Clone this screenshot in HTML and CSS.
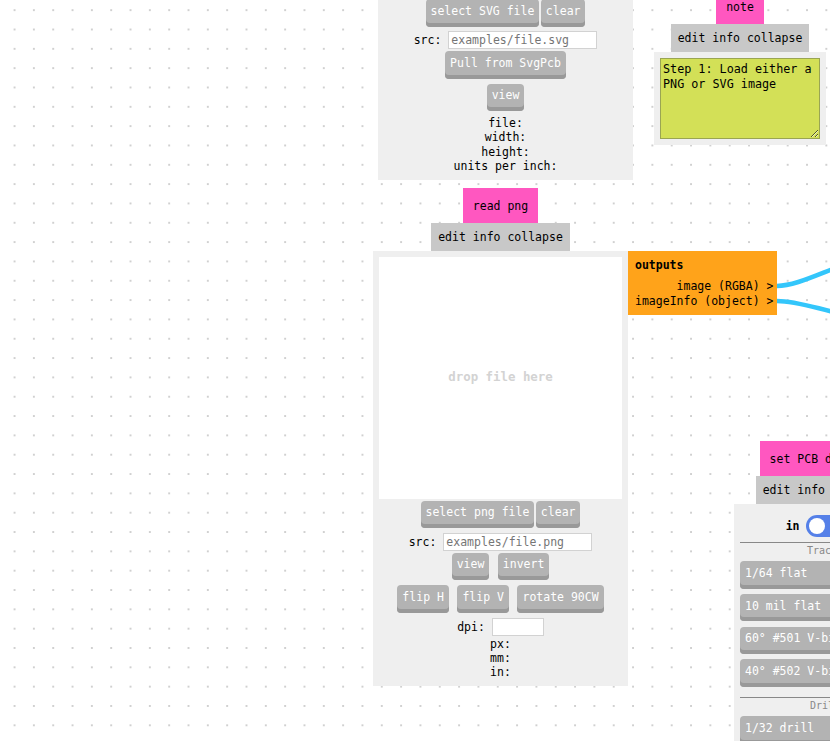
FILE: index.html
```html
<!DOCTYPE html>
<html lang="en">
<head>
  <meta charset="UTF-8">
  <meta name="viewport" content="width=device-width, initial-scale=1.0">
  <title>mods</title>
  <link rel="stylesheet" href="styles.css">
</head>
<body>
  <!-- Links between modules -->
  <svg class="links" width="830" height="741">
    <path d="M777 286 C 793 286 812 277 838 267"/>
    <path d="M777 301 C 795 301 812 307 838 313"/>
  </svg>

  <!-- read svg -->
  <div class="module read-svg">
    <div class="body">
      <div class="row tight">
        <button>select SVG file</button>
        <button>clear</button>
      </div>
      <div class="row field">
        <label for="svg-src">src:</label>
        <input id="svg-src" type="text" placeholder="examples/file.svg">
      </div>
      <div class="row"><button>Pull from SvgPcb</button></div>
      <div class="row"><button>view</button></div>
      <div class="info">
        <div>file:</div>
        <div>width:</div>
        <div>height:</div>
        <div>units per inch:</div>
      </div>
    </div>
  </div>

  <!-- note -->
  <div class="module note">
    <div class="title">note</div>
    <div class="menu">edit info collapse</div>
    <div class="body">
      <textarea spellcheck="false">Step 1: Load either a PNG or SVG image</textarea>
    </div>
  </div>

  <!-- read png -->
  <div class="module read-png">
    <div class="title">read png</div>
    <div class="menu">edit info collapse</div>
    <div class="body">
      <div class="drop">drop file here</div>
      <div class="row tight">
        <button>select png file</button>
        <button>clear</button>
      </div>
      <div class="row field">
        <label for="png-src">src:</label>
        <input id="png-src" type="text" placeholder="examples/file.png">
      </div>
      <div class="row">
        <button>view</button>
        <button>invert</button>
      </div>
      <div class="row">
        <button>flip H</button>
        <button>flip V</button>
        <button>rotate 90CW</button>
      </div>
      <div class="row field">
        <label for="dpi">dpi:</label>
        <input id="dpi" class="short" type="text">
      </div>
      <div class="info">
        <div>px:</div>
        <div>mm:</div>
        <div>in:</div>
      </div>
    </div>
    <div class="outputs">
      <b>outputs</b>
      <div>image (RGBA) &gt;</div>
      <div>imageInfo (object) &gt;</div>
    </div>
  </div>

  <!-- set PCB defaults -->
  <div class="module pcb">
    <div class="title">set PCB defaults</div>
    <div class="menu">edit info collapse</div>
    <div class="body">
      <div class="units">
        <b>in</b>
        <span class="switch"></span>
        <b>mm</b>
      </div>
      <div class="group">Traces</div>
      <button>1/64 flat</button>
      <button>10 mil flat</button>
      <button>60° #501 V-bit</button>
      <button>40° #502 V-bit</button>
      <div class="group drill">Drill</div>
      <button>1/32 drill</button>
    </div>
  </div>
</body>
</html>
```

FILE: styles.css
```css
* {
  box-sizing: border-box;
}
body {
  margin: 0;
  width: 100vw;
  height: 100vh;
  overflow: hidden;
  position: relative;
  color: #000;
  background-color: #fff;
  background-image: radial-gradient(circle, #d0d0d0 0.8px, transparent 1.3px);
  background-size: 19.335px 19.335px;
  background-position: 4.9px 0.5px;
}
body, button, input, textarea {
  font-family: "DejaVu Sans Mono", "Liberation Mono", monospace;
  font-size: 11.5px;
  line-height: 14px;
}
.links {
  position: absolute;
  left: 0;
  top: 0;
}
.links path {
  fill: none;
  stroke: #33c6fb;
  stroke-width: 4.6;
}
/* Modules */
.module {
  position: absolute;
  display: flex;
  flex-direction: column;
  align-items: center;
}
.read-svg {
  left: 378px;
  top: -8px;
  width: 255px;
}
.note {
  left: 654px;
  top: -11px;
  width: 172px;
}
.read-png {
  left: 373px;
  top: 188px;
  width: 255px;
}
.pcb {
  left: 734px;
  top: 441px;
  width: 182px;
}
.title {
  height: 35px;
  padding: 11px 10px 0;
  background: #ff57c0;
  white-space: nowrap;
}
.menu {
  height: 28px;
  padding: 7px 7px 0;
  background: #c8c8c8;
  white-space: nowrap;
}
.body {
  width: 100%;
  padding: 6px;
  background: #efefef;
}
.row {
  display: flex;
  justify-content: center;
  gap: 8.5px;
  margin-bottom: 5px;
}
.row.tight {
  gap: 1.5px;
}
.row.field {
  align-items: center;
  gap: 7px;
  margin-bottom: 1.5px;
}
button {
  height: 27.5px;
  padding: 0 5px 4px;
  border: none;
  border-radius: 4px;
  background: #b3b3b3;
  box-shadow: inset 0 -4px #999;
  color: #fff;
  white-space: nowrap;
}
input {
  width: 149px;
  height: 18px;
  padding: 0 2px;
  border: 1px solid #d2d2d2;
  background: #fff;
}
input.short {
  width: 52px;
}
input::placeholder {
  color: #757575;
}
.info {
  line-height: 14.3px;
  text-align: center;
}
.read-svg .body {
  height: 187.5px;
  padding-top: 7px;
}
.read-svg .row.field {
  margin: -1px 0 2.5px;
}
/* Note */
.note .body {
  height: 93px;
}
.note textarea {
  display: block;
  width: 160px;
  height: 81px;
  padding: 3px 2px;
  border: 1px solid #9aa552;
  background: #d3e057;
  font-size: 11.75px;
  line-height: 15px;
  overflow: hidden;
}
/* Drop area */
.drop {
  display: flex;
  align-items: center;
  justify-content: center;
  height: 242px;
  padding-bottom: 2px;
  margin-bottom: 1.5px;
  background: #fff;
  color: #d3d3d3;
  font-size: 12.4px;
  font-weight: bold;
}
.read-png .body {
  height: 434.5px;
}
.read-png .info {
  line-height: 14px;
}
/* Output ports, attached to the right side of the module */
.outputs {
  position: absolute;
  left: 100%;
  top: 63px;
  width: 149px;
  height: 63.5px;
  padding: 7px 3.5px 0 7px;
  background: #ffa31a;
  line-height: 14.5px;
  text-align: right;
  white-space: nowrap;
}
.outputs b {
  display: block;
  margin-bottom: 6.5px;
  text-align: left;
}
/* PCB defaults */
.pcb .body {
  display: flex;
  flex-direction: column;
  height: 237px;
  overflow: hidden;
}
.pcb button {
  flex-shrink: 0;
  margin-bottom: 5.3px;
  text-align: left;
}
.units {
  display: flex;
  flex-shrink: 0;
  justify-content: center;
  align-items: center;
  gap: 6px;
  height: 32px;
}
.switch {
  width: 39px;
  height: 22px;
  border-radius: 11px;
  background: #5580e8;
}
.switch::before {
  content: "";
  display: block;
  width: 16px;
  height: 16px;
  margin: 3px;
  border-radius: 50%;
  background: #fff;
}
.group {
  flex-shrink: 0;
  height: 19px;
  padding-top: 1px;
  border-top: 1px solid #888;
  color: #888;
  font-size: 10px;
  text-align: center;
}
.group.drill {
  margin-top: 5px;
}
```
